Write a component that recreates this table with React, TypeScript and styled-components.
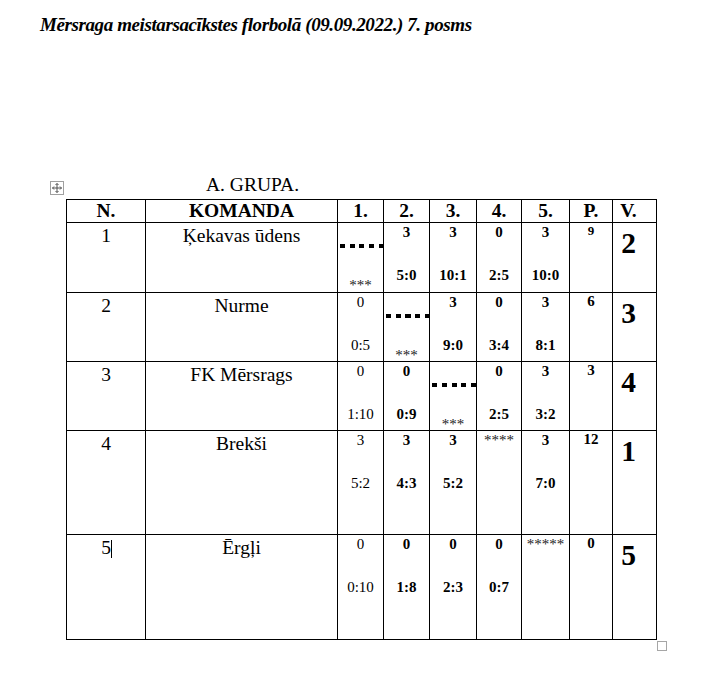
import styled, { createGlobalStyle } from "styled-components"

const GlobalStyle = createGlobalStyle`
  html, body {
    margin: 0;
    padding: 0;
    background: #fff;
  }
  body {
    font-family: "Liberation Serif", "Times New Roman", serif;
    color: #000;
  }
`

type Cell =
  | { kind: "score"; p: string; s: string; plain?: boolean }
  | { kind: "dots" }
  | { kind: "stars"; text: string }

type Row = {
  n: string
  team: string
  cells: Cell[]
  pts: string
  small?: boolean
  place: string
  cursor?: boolean
}

const rows: Row[] = [
  {
    n: "1",
    team: "Ķekavas ūdens",
    cells: [
      { kind: "dots" },
      { kind: "score", p: "3", s: "5:0" },
      { kind: "score", p: "3", s: "10:1" },
      { kind: "score", p: "0", s: "2:5" },
      { kind: "score", p: "3", s: "10:0" },
    ],
    pts: "9",
    small: true,
    place: "2",
  },
  {
    n: "2",
    team: "Nurme",
    cells: [
      { kind: "score", p: "0", s: "0:5", plain: true },
      { kind: "dots" },
      { kind: "score", p: "3", s: "9:0" },
      { kind: "score", p: "0", s: "3:4" },
      { kind: "score", p: "3", s: "8:1" },
    ],
    pts: "6",
    place: "3",
  },
  {
    n: "3",
    team: "FK Mērsrags",
    cells: [
      { kind: "score", p: "0", s: "1:10", plain: true },
      { kind: "score", p: "0", s: "0:9" },
      { kind: "dots" },
      { kind: "score", p: "0", s: "2:5" },
      { kind: "score", p: "3", s: "3:2" },
    ],
    pts: "3",
    place: "4",
  },
  {
    n: "4",
    team: "Brekši",
    cells: [
      { kind: "score", p: "3", s: "5:2", plain: true },
      { kind: "score", p: "3", s: "4:3" },
      { kind: "score", p: "3", s: "5:2" },
      { kind: "stars", text: "****" },
      { kind: "score", p: "3", s: "7:0" },
    ],
    pts: "12",
    place: "1",
  },
  {
    n: "5",
    team: "Ērgļi",
    cells: [
      { kind: "score", p: "0", s: "0:10", plain: true },
      { kind: "score", p: "0", s: "1:8" },
      { kind: "score", p: "0", s: "2:3" },
      { kind: "score", p: "0", s: "0:7" },
      { kind: "stars", text: "*****" },
    ],
    pts: "0",
    place: "5",
    cursor: true,
  },
]

const headers = ["N.", "KOMANDA", "1.", "2.", "3.", "4.", "5.", "P."]

const Page = styled.div`
  width: 701px;
  min-height: 673px;
`

const Title = styled.h1`
  margin: 0;
  padding: 13px 0 0 40px;
  height: 25px;
  font-family: "Liberation Serif", "Times New Roman", serif;
  font-style: italic;
  font-weight: 700;
  font-size: 19px;
  line-height: 24px;
  letter-spacing: -0.4px;
  white-space: nowrap;
`

const Section = styled.section`
  position: relative;
  margin: 136px 0 0 66px;
  width: 591px;
`

const Caption = styled.div`
  padding-left: 140px;
  margin-bottom: 3px;
  font-size: 19.5px;
  line-height: 22px;
`

const MoveHandle = styled.svg`
  position: absolute;
  left: -16px;
  top: 7px;
`

const Table = styled.div`
  position: relative;
  display: grid;
  grid-template-columns: 79px 192px 46px 46px 47px 45px 48px 43px 44px;
  grid-template-rows: 23px 70px 69px 69px 104px 105px;
  border-left: 1px solid #000;
  border-top: 1px solid #000;
`

const Box = styled.div`
  box-sizing: border-box;
  border-right: 1px solid #000;
  border-bottom: 1px solid #000;
  text-align: center;
  overflow: hidden;
`

const HeadCell = styled(Box)<{ $right?: boolean }>`
  font-weight: 700;
  font-size: 19.5px;
  line-height: 22px;
  padding-right: ${(p) => (p.$right ? "12px" : "0")};
`

const TextCell = styled(Box)`
  padding-top: 2px;
  font-size: 19.5px;
  line-height: 22px;
`

const Cursor = styled.span`
  display: inline-block;
  width: 1px;
  height: 18px;
  margin-right: -1px;
  background: #000;
  vertical-align: -4px;
`

const ScoreCell = styled(Box)<{ $plain?: boolean }>`
  padding-top: 1px;
  font-size: 15px;
  font-weight: ${(p) => (p.$plain ? 400 : 700)};
`

const Points = styled.div`
  line-height: 16px;
`

const Result = styled.div`
  margin-top: 27px;
  line-height: 16px;
`

const DotsCell = styled(Box)`
  padding-top: 21px;
`

const DotBar = styled.div`
  margin-left: 2px;
  width: 44px;
  height: 4px;
  background: repeating-linear-gradient(90deg, #000 0 5px, transparent 5px 9.75px);
`

const Stars = styled.div`
  margin-top: 33px;
  font-size: 15px;
  line-height: 8px;
  color: #222;
`

const TopStars = styled(Box)`
  padding-top: 1px;
  font-size: 15px;
  line-height: 16px;
  color: #222;
  white-space: nowrap;
`

const PointsCell = styled(Box)<{ $small?: boolean }>`
  font-weight: 700;
  font-size: ${(p) => (p.$small ? "13px" : "15px")};
  line-height: 16px;
`

const PlaceCell = styled(Box)`
  padding: 3px 12px 0 0;
  font-weight: 700;
  font-size: 29.5px;
  line-height: 34px;
`

const CornerMark = styled.div`
  position: absolute;
  left: 100%;
  top: calc(100% + 1px);
  width: 10px;
  height: 10px;
  box-sizing: border-box;
  border: 1px solid #a6a6a6;
`

const renderCell = (c: Cell, i: number) => {
  if (c.kind === "dots") {
    return (
      <DotsCell key={i}>
        <DotBar />
        <Stars>***</Stars>
      </DotsCell>
    )
  }
  if (c.kind === "stars") {
    return <TopStars key={i}>{c.text}</TopStars>
  }
  return (
    <ScoreCell key={i} $plain={c.plain}>
      <Points>{c.p}</Points>
      <Result>{c.s}</Result>
    </ScoreCell>
  )
}

const App = () => {
  return (
    <Page>
      <GlobalStyle />
      <Title>Mērsraga meistarsacīkstes florbolā (09.09.2022.) 7. posms</Title>
      <Section>
        <MoveHandle width="14" height="14" viewBox="0 0 14 14">
          <rect x="0.5" y="0.5" width="13" height="13" fill="#fff" stroke="#a0a0a0" />
          <path d="M7 2.5v9M2.5 7h9" stroke="#505050" strokeWidth="1" fill="none" />
          <path
            d="M5.5 4L7 2.5L8.5 4M5.5 10L7 11.5L8.5 10M4 5.5L2.5 7L4 8.5M10 5.5L11.5 7L10 8.5"
            stroke="#505050"
            strokeWidth="1"
            fill="none"
          />
        </MoveHandle>
        <Caption>A. GRUPA.</Caption>
        <Table>
          {headers.map((h) => (
            <HeadCell key={h}>{h}</HeadCell>
          ))}
          <HeadCell $right>V.</HeadCell>
          {rows.map((r) => [
            <TextCell key={r.n + "n"}>
              {r.n}
              {r.cursor && <Cursor />}
            </TextCell>,
            <TextCell key={r.n + "t"}>{r.team}</TextCell>,
            ...r.cells.map((c, i) => renderCell(c, Number(r.n) * 10 + i)),
            <PointsCell key={r.n + "p"} $small={r.small}>
              {r.pts}
            </PointsCell>,
            <PlaceCell key={r.n + "v"}>{r.place}</PlaceCell>,
          ])}
          <CornerMark />
        </Table>
      </Section>
    </Page>
  )
}

export default App
